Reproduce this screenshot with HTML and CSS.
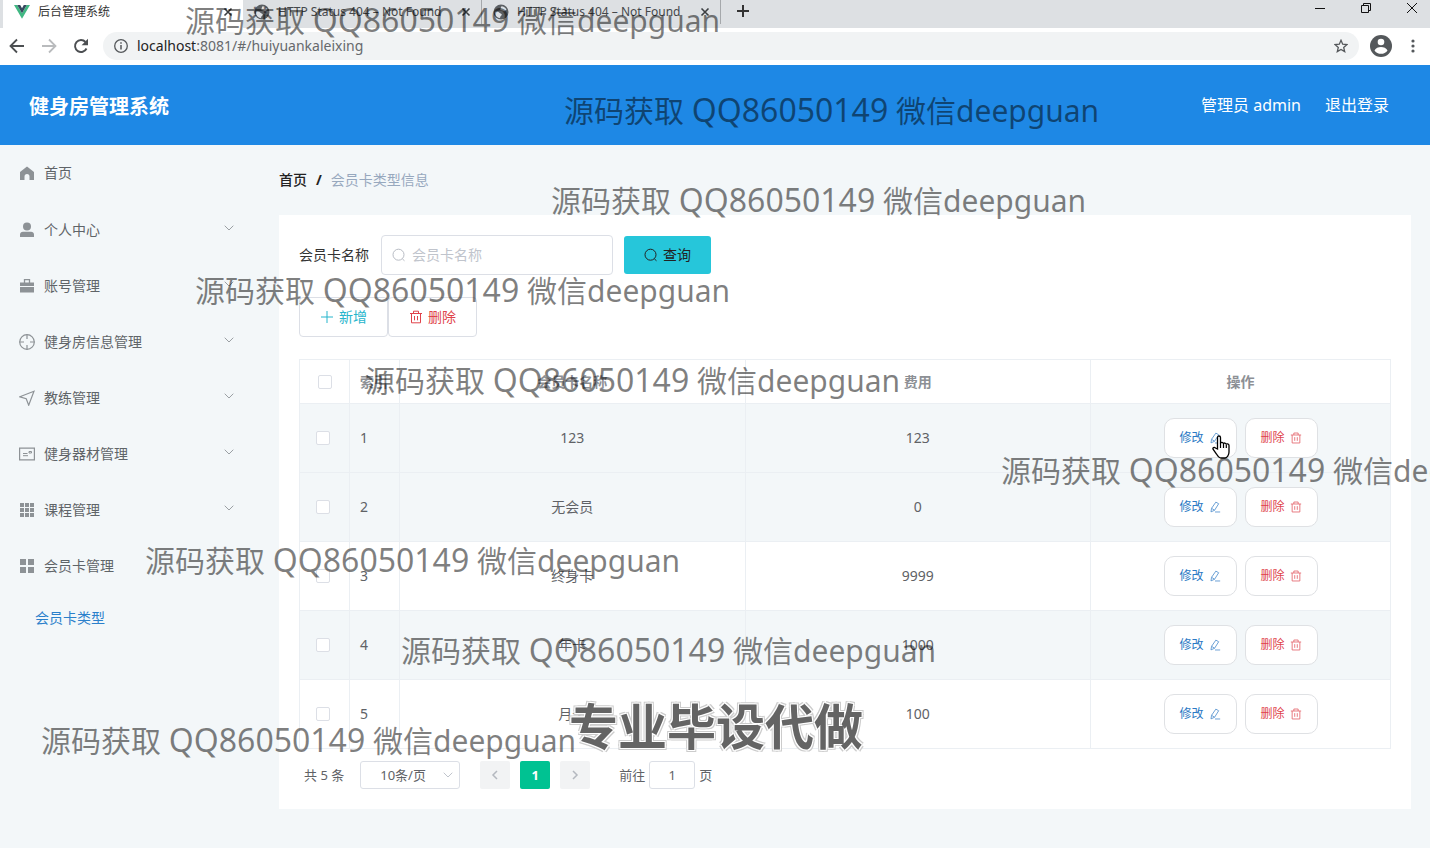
FILE: index.html
```
<!DOCTYPE html>
<html lang="zh-CN">
<head>
<meta charset="utf-8">
<title>后台管理系统</title>
<link rel="stylesheet" href="styles.css">
</head>
<body>
<svg class="defs" aria-hidden="true">
  <symbol id="close" viewBox="0 0 10 10"><path d="M1.500 1.500l7 7M8.500 1.500l-7 7" fill="none" stroke="currentColor" stroke-width="1.600"/></symbol>
  <symbol id="globe" viewBox="0 0 16 16"><circle cx="8" cy="8" r="7.500" fill="#5b5f63"/><path d="M1.800 8c2-.8 3.500-.3 4.700.8 1 1 2.300.7 2.300 1.900 0 1-1.500 1-1.500 2.200 0 .8-.5 1.200-1.300 1A6.500 6.500 0 0 1 1.800 8zM8.500 2.200c2 0 4 1.200 5 3.600-1 .2-1.200 1.200-2.200 1.400-1.300.3-1.500-.9-2.800-.9-1 0-1.500-.8-1-1.600s.2-1.500 1-2.500z" fill="#dde0e3"/></symbol>
  <symbol id="down" viewBox="0 0 10 6"><path d="M.7.700L5 5 9.300.7" fill="none" stroke="currentColor"/></symbol>
  <symbol id="search" viewBox="0 0 14 14"><circle cx="6.500" cy="6.700" r="5.500" fill="none" stroke="currentColor"/><path d="M10.300 10.800l2.200 2" stroke="currentColor"/></symbol>
  <symbol id="trash" viewBox="0 0 14 14"><path d="M1 3.500h12M4.500 3.500V1.200h5v2.300M2.500 3.500v9.300h9V3.500M5.500 6v4.300M8.500 6v4.300" fill="none" stroke="currentColor"/></symbol>
  <symbol id="edit" viewBox="0 0 14 14"><path d="M8 1.300l3.300 1.900-4.800 7.600-4.200 1.900.7-4.200zM3 8.500l3.500 2.300M7 12.800h6" fill="none" stroke="currentColor"/></symbol>
</svg>

<div class="browser">
  <div class="tabs">
    <div class="tab active"><svg class="fav" viewBox="0 0 16 14"><path d="M0 0h3.200L8 8.300 12.800 0H16L8 13.800z" fill="#41b883"/><path d="M3.200 0h3L8 3.200 9.800 0h3L8 8.300z" fill="#35495e"/></svg><span class="title">后台管理系统</span><svg class="x"><use href="#close"/></svg></div>
    <div class="tab"><svg class="fav"><use href="#globe"/></svg><span class="title">HTTP Status 404 – Not Found</span><svg class="x"><use href="#close"/></svg></div>
    <div class="tab"><svg class="fav"><use href="#globe"/></svg><span class="title">HTTP Status 404 – Not Found</span><svg class="x"><use href="#close"/></svg></div>
    <svg class="plus" viewBox="0 0 12 12"><path d="M6 0v12M0 6h12" stroke="#333" stroke-width="2"/></svg>
    <div class="window">
      <svg viewBox="0 0 12 12"><path d="M1 6.500h10" stroke="#111"/></svg>
      <svg viewBox="0 0 12 12"><path d="M1.500 3.500h7v7h-7zM3.500 3.500v-2h7v7h-2" fill="none" stroke="#111"/></svg>
      <svg viewBox="0 0 12 12"><path d="M1 1l10 10M11 1L1 11" stroke="#111"/></svg>
    </div>
  </div>
  <div class="toolbar">
    <svg class="nav" viewBox="0 0 16 16"><path d="M15 8H2M8 1.500L1.500 8 8 14.500" fill="none" stroke="#4c4f52" stroke-width="1.800"/></svg>
    <svg class="nav" viewBox="0 0 16 16"><path d="M1 8h13M8 1.500L14.500 8 8 14.500" fill="none" stroke="#b9bbbd" stroke-width="1.800"/></svg>
    <svg class="nav" viewBox="0 0 16 16"><path d="M13.500 10.500A6 6 0 1 1 12.500 4" fill="none" stroke="#4c4f52" stroke-width="1.900"/><path d="M15 .8v6.400H8.600z" fill="#4c4f52"/></svg>
    <div class="address">
      <svg class="info" viewBox="0 0 14 14"><circle cx="7" cy="7" r="6.300" fill="none" stroke="#55585b" stroke-width="1.300"/><path d="M7 6v4.500M7 3.300v1.500" stroke="#55585b" stroke-width="1.500"/></svg>
      <span class="url"><b>localhost</b>:8081/#/huiyuankaleixing</span>
      <svg class="star" viewBox="0 0 14 14"><path d="M7 1.300l1.700 3.900 4.200.4-3.200 2.800 1 4.200L7 10.400l-3.700 2.200 1-4.200L1.100 5.600l4.200-.4z" fill="none" stroke="#55585b" stroke-width="1.300"/></svg>
    </div>
    <svg class="user" viewBox="0 0 22 22"><circle cx="11" cy="11" r="11" fill="#54585b"/><circle cx="11" cy="7" r="3.300" fill="#fff"/><path d="M4.500 15.500c1-2.500 4-3.500 6.500-3.500s5.500 1 6.500 3.500a8 8 0 0 1-13 0z" fill="#fff"/></svg>
    <svg class="dots" viewBox="0 0 4 14"><g fill="#54585b"><circle cx="2" cy="2" r="1.600"/><circle cx="2" cy="7" r="1.600"/><circle cx="2" cy="12" r="1.600"/></g></svg>
  </div>
</div>

<header class="header">
  <h1>健身房管理系统</h1>
  <span>管理员 admin</span>
  <a href="#">退出登录</a>
</header>

<div class="body">
  <nav class="side">
    <a class="item home" href="#"><svg class="ico" viewBox="0 0 16 16"><path d="M8 1.500L15 7v8h-4.500v-3.500a2.500 2.500 0 0 0-5 0V15H1V7z" fill="currentColor"/></svg>首页</a>
    <a class="item" href="#"><svg class="ico" viewBox="0 0 16 16"><circle cx="8" cy="4.600" r="4" fill="currentColor"/><path d="M1 15v-2.500a3 3 0 0 1 3-2.700h8a3 3 0 0 1 3 2.700V15z" fill="currentColor"/></svg>个人中心<svg class="arrow"><use href="#down"/></svg></a>
    <a class="item" href="#"><svg class="ico" viewBox="0 0 16 16"><path d="M1 4.500h14V8H1zM1 9h14v5.500H1z" fill="currentColor"/><path d="M5.500 5V1.700h5V5" fill="none" stroke="currentColor" stroke-width="1.300"/></svg>账号管理<svg class="arrow"><use href="#down"/></svg></a>
    <a class="item" href="#"><svg class="ico" viewBox="0 0 16 16"><circle cx="8" cy="8" r="7.300" fill="none" stroke="currentColor" stroke-width="1.200"/><path d="M8 .5v4.500M8 11v4.500M.5 8H5M11 8h4.500" stroke="currentColor" stroke-width="1.200"/></svg>健身房信息管理<svg class="arrow"><use href="#down"/></svg></a>
    <a class="item" href="#"><svg class="ico" viewBox="0 0 16 16"><path d="M15 1.300L.8 6.800l6.400 2 2.500 6.400z" fill="none" stroke="currentColor" stroke-width="1.200"/></svg>教练管理<svg class="arrow"><use href="#down"/></svg></a>
    <a class="item" href="#"><svg class="ico" viewBox="0 0 16 16"><path d="M.6 2.100h14.800v11.800H.6z" fill="none" stroke="currentColor" stroke-width="1.200"/><path d="M4 7.500h4.500M4 9.700h5M10 5.500h2.500v1.500H10z" stroke="currentColor" fill="none"/></svg>健身器材管理<svg class="arrow"><use href="#down"/></svg></a>
    <a class="item" href="#"><svg class="ico" viewBox="0 0 16 16"><path d="M1 1h4v4H1zM6 1h4v4H6zM11 1h4v4h-4zM1 6h4v4H1zM6 6h4v4H6zM11 6h4v4h-4zM1 11h4v4H1zM6 11h4v4H6zM11 11h4v4h-4z" fill="currentColor"/></svg>课程管理<svg class="arrow"><use href="#down"/></svg></a>
    <a class="item" href="#"><svg class="ico" viewBox="0 0 16 16"><path d="M1 1h6v6H1zM9 1h6v6H9zM1 9h6v6H1zM9 9h6v6H9z" fill="currentColor"/></svg>会员卡管理</a>
    <a class="sub" href="#">会员卡类型</a>
  </nav>

  <main class="main">
    <div class="crumbs"><a href="#">首页</a><b>/</b><span>会员卡类型信息</span></div>
    <section class="card">
      <form class="query">
        <label for="name">会员卡名称</label>
        <div class="field"><svg><use href="#search"/></svg><input id="name" type="text" placeholder="会员卡名称"></div>
        <button class="find" type="button"><svg><use href="#search"/></svg>查询</button>
      </form>
      <div class="actions">
        <button class="add" type="button"><svg viewBox="0 0 14 14"><path d="M7 1v12M1 7h12" stroke="currentColor"/></svg>新增</button>
        <button class="del" type="button"><svg><use href="#trash"/></svg>删除</button>
      </div>
      <table class="grid">
        <colgroup><col class="narrow"><col class="narrow"><col><col><col class="ops"></colgroup>
        <thead><tr><th><input type="checkbox" aria-label="全选"></th><th class="idx">索引</th><th>会员卡名称</th><th>费用</th><th>操作</th></tr></thead>
        <tbody>
          <tr class="shade"><td class="pick"><input type="checkbox" aria-label="1"></td><td class="idx">1</td><td>123</td><td>123</td><td><div class="pair"><button class="edit" type="button">修改<svg><use href="#edit"/></svg></button><button class="del" type="button">删除<svg><use href="#trash"/></svg></button></div></td></tr>
          <tr class="shade"><td class="pick"><input type="checkbox" aria-label="2"></td><td class="idx">2</td><td>无会员</td><td>0</td><td><div class="pair"><button class="edit" type="button">修改<svg><use href="#edit"/></svg></button><button class="del" type="button">删除<svg><use href="#trash"/></svg></button></div></td></tr>
          <tr><td class="pick"><input type="checkbox" aria-label="3"></td><td class="idx">3</td><td>终身卡</td><td>9999</td><td><div class="pair"><button class="edit" type="button">修改<svg><use href="#edit"/></svg></button><button class="del" type="button">删除<svg><use href="#trash"/></svg></button></div></td></tr>
          <tr class="shade"><td class="pick"><input type="checkbox" aria-label="4"></td><td class="idx">4</td><td>年卡</td><td>1000</td><td><div class="pair"><button class="edit" type="button">修改<svg><use href="#edit"/></svg></button><button class="del" type="button">删除<svg><use href="#trash"/></svg></button></div></td></tr>
          <tr><td class="pick"><input type="checkbox" aria-label="5"></td><td class="idx">5</td><td>月卡</td><td>100</td><td><div class="pair"><button class="edit" type="button">修改<svg><use href="#edit"/></svg></button><button class="del" type="button">删除<svg><use href="#trash"/></svg></button></div></td></tr>
        </tbody>
      </table>
      <div class="pages">
        <span>共 5 条</span>
        <div class="size"><select aria-label="每页条数"><option>10条/页</option></select><svg><use href="#down"/></svg></div>
        <div class="pager">
          <button type="button" aria-label="上一页"><svg viewBox="0 0 8 10"><path d="M6 1L2 5l4 4" fill="none" stroke="#b4b8bf" stroke-width="1.500"/></svg></button>
          <button class="on" type="button">1</button>
          <button type="button" aria-label="下一页"><svg viewBox="0 0 8 10"><path d="M2 1l4 4-4 4" fill="none" stroke="#b4b8bf" stroke-width="1.500"/></svg></button>
        </div>
        <div class="jump"><label for="page">前往</label><input id="page" type="text" value="1"><span>页</span></div>
      </div>
    </section>
  </main>
</div>

<div class="overlay">
  <span class="mark m1">源码获取 <b>QQ86050149</b> 微信deepguan</span>
  <span class="mark m2">源码获取 <b>QQ86050149</b> 微信deepguan</span>
  <span class="mark m3">源码获取 <b>QQ86050149</b> 微信deepguan</span>
  <span class="mark m4">源码获取 <b>QQ86050149</b> 微信deepguan</span>
  <span class="mark m5">源码获取 <b>QQ86050149</b> 微信deepguan</span>
  <span class="mark m6">源码获取 <b>QQ86050149</b> 微信deepguan</span>
  <span class="mark m7">源码获取 <b>QQ86050149</b> 微信deepguan</span>
  <span class="mark m8">源码获取 <b>QQ86050149</b> 微信deepguan</span>
  <span class="mark m9">源码获取 <b>QQ86050149</b> 微信deepguan</span>
  <span class="banner">专业毕设代做</span>
  <svg class="cursor" viewBox="0 0 18 24"><path d="M5.500 14V2.500C5.500.5 8.500.5 8.500 2.500v6c0-1.500 3-1.500 3 .5 0-1.500 2.800-1.300 2.800.7 0-1.300 2.700-1 2.700.8V17c0 3-2 6-4 6H9c-2 0-3-1.500-4.500-4L1.200 14.500c-1-1.700 1-2.800 2.300-1.500z" fill="#fff" stroke="#000" stroke-width="1.300"/><path d="M8.500 8v5M11.500 9v4M14.300 10v3" stroke="#000" stroke-width="1.200"/></svg>
</div>
</body>
</html>
```
FILE: styles.css
```
* { box-sizing: border-box; }
body {
  margin: 0;
  min-height: 100vh;
  display: flex;
  flex-direction: column;
  position: relative;
  overflow: hidden;
  background: #f3f7f9;
  color: #606266;
  font: 14px/20px "Noto Sans", "Noto Sans CJK SC", sans-serif;
}
button, input, select { font: inherit; color: inherit; margin: 0; }
button { cursor: pointer; }
a { color: inherit; text-decoration: none; }
svg { flex: none; }
.defs { position: absolute; width: 0; height: 0; }

.tabs { display: flex; height: 28px; padding-left: 3px; background: #dde0e3; }
.tab {
  display: flex;
  align-items: center;
  width: 239px;
  height: 24px;
  padding: 0 10px 0 11px;
  gap: 8px;
  font-size: 12px;
  color: #45484b;
  border-right: 1px solid #a5a8ab;
}
.tab.active { width: 240px; height: 28px; padding-bottom: 4px; background: #fff; color: #333; border: 0; }
.fav { width: 16px; height: 16px; }
.active .fav { height: 14px; }
.title { flex: 1; white-space: nowrap; }
.x { width: 10px; height: 10px; color: #3c3f42; }
.plus { width: 12px; height: 12px; margin: 5px 0 0 16px; }
.window { display: flex; gap: 34px; margin: 2px 12px 0 auto; }
.window svg { width: 12px; height: 12px; }
.toolbar {
  display: flex;
  align-items: center;
  height: 37px;
  padding: 0 15px 1px 9px;
  gap: 16px;
  background: #fff;
}
.nav { width: 16px; height: 16px; }
.address {
  flex: 1;
  display: flex;
  align-items: center;
  gap: 9px;
  height: 28px;
  margin-right: -5px;
  margin-left: -2px;
  padding: 0 11px;
  border-radius: 14px;
  background: #f1f3f4;
}
.info, .star { width: 14px; height: 14px; }
.url { flex: 1; color: #66696c; }
.url b { font-weight: 400; color: #222; }
.user { width: 22px; height: 22px; margin-right: 3px; }
.dots { width: 4px; height: 14px; }

.header {
  display: flex;
  align-items: center;
  gap: 24px;
  height: 80px;
  padding: 0 41px 0 29px;
  background: #1e88e5;
  color: #fff;
  font-size: 16px;
}
.header h1 { flex: 1; margin: 0; padding-top: 3px; font-size: 20px; line-height: 28px; }

.body { flex: 1; display: flex; }
.side { width: 259px; flex: none; color: #5f6468; }
.item { display: flex; align-items: center; height: 56px; padding: 0 25px 0 19px; gap: 9px; }
.home { margin-bottom: 1px; }
.ico { width: 16px; height: 16px; color: #8d9296; }
.arrow { width: 10px; height: 6px; margin: 0 0 4px auto; color: #9ba0a4; }
.sub { display: flex; align-items: center; height: 48px; padding-left: 35px; color: #2b80cb; }

.main { flex: 1; min-width: 0; padding: 10px 19px 39px 20px; }
.crumbs { display: flex; align-items: center; height: 50px; margin-bottom: 10px; color: #97a8be; }
.crumbs a { color: #222; font-weight: 500; }
.crumbs b { margin: 0 9px; color: #222; }
.card { padding: 20px; background: #fff; }
.query { display: flex; align-items: center; height: 40px; color: #333; }
.field {
  display: flex;
  align-items: center;
  width: 232px;
  height: 40px;
  margin: 0 11px 0 12px;
  padding: 0 10px;
  gap: 6px;
  border: 1px solid #dcdfe6;
  border-radius: 4px;
  color: #b8bcc4;
}
.field svg, .find svg, .actions svg { width: 14px; height: 14px; }
.field input { flex: 1; min-width: 0; padding: 0; border: 0; outline: 0; background: none; color: #333; }
.field input::placeholder { color: #c0c4cc; }
.find {
  display: flex;
  align-items: center;
  justify-content: center;
  gap: 5px;
  width: 87px;
  height: 38px;
  border: 0;
  border-radius: 3px;
  background: #26c6da;
  color: #222;
}
.actions { display: flex; margin: 22px 0; }
.actions button {
  display: flex;
  align-items: center;
  justify-content: center;
  gap: 5px;
  width: 89px;
  height: 40px;
  padding: 0;
  border: 1px solid #dcdfe6;
  border-radius: 4px;
  background: #fff;
}
.add { color: #26b5cc; }
.del { color: #e0434b; }

.grid { width: 100%; table-layout: fixed; border-collapse: collapse; text-align: center; }
.narrow { width: 50px; }
.ops { width: 300px; }
.grid th, .grid td { padding: 0; border: 1px solid #ebeff3; }
.grid th { height: 44px; color: #8d9095; font-weight: 600; }
.grid td { height: 69px; }
.grid .idx { padding-left: 10px; text-align: left; }
.grid .pick { padding-right: 4px; }
.shade { background: #f3f7f9; }
.grid input {
  appearance: none;
  display: block;
  width: 14px;
  height: 14px;
  margin: auto;
  border: 1px solid #dcdfe6;
  border-radius: 2px;
  background: #fff;
}
.pair { display: flex; justify-content: center; gap: 8px; }
.pair button {
  display: flex;
  align-items: center;
  justify-content: center;
  gap: 5px;
  width: 73px;
  height: 40px;
  padding: 0;
  border: 1px solid #dfe1e4;
  border-radius: 10px;
  background: #fff;
  font-size: 12px;
}
.pair svg { width: 12px; height: 12px; opacity: .8; }
.edit { color: #2b79c4; }

.pages { display: flex; align-items: center; height: 28px; margin: 12px 0 0 5px; font-size: 13px; }
.size { display: flex; align-items: center; position: relative; width: 100px; margin: 0 20px 0 16px; }
.size select {
  appearance: none;
  width: 100%;
  height: 28px;
  padding: 0 0 0 19px;
  border: 1px solid #dcdfe6;
  border-radius: 3px;
  background: #fff;
}
.size svg { position: absolute; right: 7px; width: 10px; height: 6px; color: #c0c4cc; }
.pager { display: flex; gap: 10px; }
.pager button {
  display: flex;
  align-items: center;
  justify-content: center;
  width: 30px;
  height: 28px;
  padding: 0;
  border: 0;
  border-radius: 2px;
  background: #f2f3f4;
  font-weight: 700;
}
.pager svg { width: 8px; height: 10px; }
.pager .on { background: #00c292; color: #fff; }
.jump { display: flex; align-items: center; gap: 4px; margin-left: 29px; }
.jump input {
  width: 46px;
  height: 28px;
  padding: 0;
  border: 1px solid #dcdfe6;
  border-radius: 3px;
  text-align: center;
}

.overlay { position: absolute; inset: 0; overflow: hidden; pointer-events: none; }
.mark { position: absolute; font-size: 30px; line-height: 40px; white-space: nowrap; color: rgba(0, 0, 0, .5); }
.mark b { font-size: 32px; font-weight: 400; line-height: 1; }
.m1 { left: 185px; top: 1px; }
.m2 { left: 564px; top: 91px; }
.m3 { left: 551px; top: 181px; }
.m4 { left: 195px; top: 271px; }
.m5 { left: 365px; top: 361px; }
.m6 { left: 1001px; top: 451px; }
.m7 { left: 145px; top: 541px; }
.m8 { left: 401px; top: 631px; }
.m9 { left: 41px; top: 721px; }
.banner {
  position: absolute;
  left: 569px;
  top: 696px;
  font-size: 49px;
  line-height: 60px;
  font-weight: 700;
  color: #646464;
  white-space: nowrap;
  text-shadow: 1px 1px 0 #fff, -1px -1px 0 #fff, 1px -1px 0 #fff, -1px 1px 0 #fff, 2px 2px 0 #ccc, -2px -2px 0 #ccc, 2px -2px 0 #ccc, -2px 2px 0 #ccc;
}
.cursor { position: absolute; left: 1212px; top: 435px; width: 18px; height: 24px; }
```
